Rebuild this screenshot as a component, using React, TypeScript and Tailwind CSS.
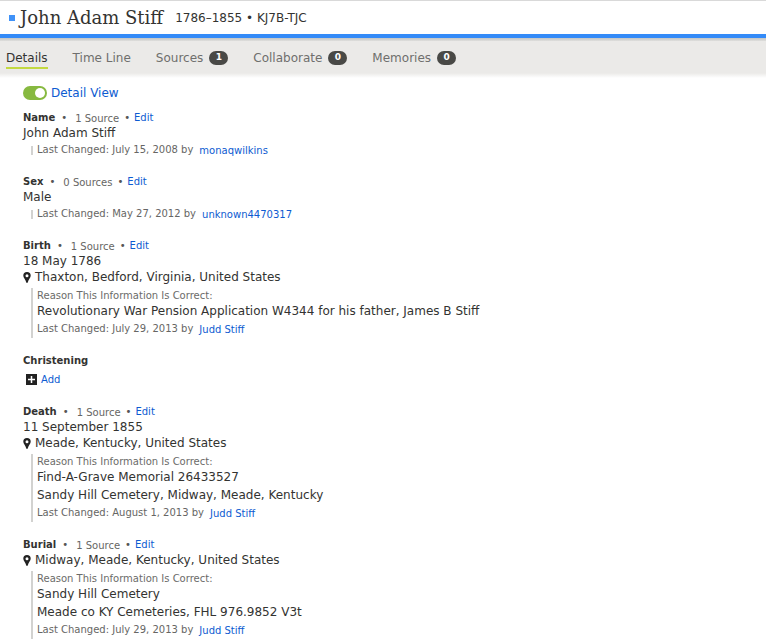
import React, { useState } from "react";

type Fact = {
  title: string;
  sources?: string;
  value?: string;
  place?: string;
  reason?: string[];
  changed?: string;
  by?: string;
};

const facts: Fact[] = [
  { title: "Name", sources: "1 Source", value: "John Adam Stiff", changed: "July 15, 2008", by: "monaqwilkins" },
  { title: "Sex", sources: "0 Sources", value: "Male", changed: "May 27, 2012", by: "unknown4470317" },
  {
    title: "Birth",
    sources: "1 Source",
    value: "18 May 1786",
    place: "Thaxton, Bedford, Virginia, United States",
    reason: ["Revolutionary War Pension Application W4344 for his father, James B Stiff"],
    changed: "July 29, 2013",
    by: "Judd Stiff",
  },
  { title: "Christening" },
  {
    title: "Death",
    sources: "1 Source",
    value: "11 September 1855",
    place: "Meade, Kentucky, United States",
    reason: ["Find-A-Grave Memorial 26433527", "Sandy Hill Cemetery, Midway, Meade, Kentucky"],
    changed: "August 1, 2013",
    by: "Judd Stiff",
  },
  {
    title: "Burial",
    sources: "1 Source",
    place: "Midway, Meade, Kentucky, United States",
    reason: ["Sandy Hill Cemetery", "Meade co KY Cemeteries, FHL 976.9852 V3t"],
    changed: "July 29, 2013",
    by: "Judd Stiff",
  },
];

const tabs = [
  { label: "Details" },
  { label: "Time Line" },
  { label: "Sources", count: 1 },
  { label: "Collaborate", count: 0 },
  { label: "Memories", count: 0 },
];

function Pin() {
  return (
    <svg width="8" height="11" viewBox="0 0 8 11" aria-hidden="true" className="shrink-0">
      <path
        fill="#222"
        fillRule="evenodd"
        d="M4 0A3.700 3.700 0 0 0 .3 3.700C.3 6 2.700 7.500 3.200 10.300c.1.900 1.500.900 1.600 0C5.300 7.500 7.700 6 7.700 3.700A3.700 3.700 0 0 0 4 0Zm0 2.200a1.500 1.500 0 1 1 0 3 1.500 1.500 0 0 1 0-3Z"
      />
    </svg>
  );
}

function FactSection({ fact }: { fact: Fact }) {
  return (
    <section>
      <div className="flex h-[15px] items-center text-[10px] leading-[15px]">
        <h2 className="font-bold text-[#333331]">{fact.title}</h2>
        {fact.sources && (
          <>
            <span className="ml-[6px] text-[#555]">•</span>
            <button type="button" className="ml-2 pt-[2px] text-[#666664]">{fact.sources}</button>
            <span className="ml-[5px] text-[#555]">•</span>
            <a href="#edit" className="ml-1 text-[#0d5bd1]">Edit</a>
          </>
        )}
      </div>
      {fact.value && <p className="h-4 text-[12px] leading-4">{fact.value}</p>}
      {fact.place && (
        <p className="flex h-4 items-center gap-1 text-[12px] leading-4">
          <Pin />
          {fact.place}
        </p>
      )}
      {fact.changed ? (
        <div className={fact.reason ? "ml-2 mt-[3px] border-l-2 border-[#d2d2d0] pl-1" : "ml-2 flex items-center"}>
          {!fact.reason && <span className="mr-1 h-[9px] w-[2px] bg-[#d2d2d0]" />}
          {fact.reason && (
            <>
              <p className="h-[14px] text-[10px] leading-[15px] text-[#6b6b69]">Reason This Information Is Correct:</p>
              {fact.reason.map((line) => (
                <p key={line} className="text-[12px] leading-[18px]">{line}</p>
              ))}
            </>
          )}
          <p className="flex h-[18px] gap-[6px] text-[10px] leading-[18px] text-[#666664]">
            Last Changed: {fact.changed} by
            <a href="#contributor" className="leading-[20px] text-[#0d5bd1]">{fact.by}</a>
          </p>
        </div>
      ) : (
        <button type="button" className="ml-[3px] flex h-[21px] items-center gap-1 pt-[1px] text-[10px] text-[#0d5bd1]">
          <svg width="11" height="11" viewBox="0 0 11 11" aria-hidden="true">
            <path fill="#222" d="M0 0h11v11H0z" />
            <path stroke="#fff" strokeWidth="1.500" d="M5.500 2v7M2 5.500h7" />
          </svg>
          Add
        </button>
      )}
    </section>
  );
}

export default function App() {
  const [detail, setDetail] = useState(true);
  return (
    <div className="bg-white font-['DejaVu_Sans',sans-serif] text-[#333331]">
      <header className="flex h-[38px] items-center border-b-4 border-t border-b-[#348bf8] border-t-[#d9d9d9] pl-[9px]">
        <span className="h-[6px] w-[6px] bg-[#4092f8]" />
        <h1 className="ml-[5px] whitespace-nowrap font-['DejaVu_Serif',serif] text-[18px]">John Adam Stiff</h1>
        <p className="ml-3 whitespace-nowrap text-[12px]">1786–1855 • KJ7B-TJC</p>
      </header>
      <div className="h-[3px] bg-linear-to-b from-[#c5c5c3] to-[#dfdfdd]" />
      <nav className="flex h-8 items-center gap-[25px] bg-[#ebeae8] pl-[6px] pt-[2px] text-[12px] text-[#6f6f6d]">
        {tabs.map((tab, i) => (
          <a
            key={tab.label}
            href="#tab"
            className={
              i === 0
                ? "flex h-[22px] items-center border-y-2 border-t-transparent border-b-[#c3d941] text-[#333331]"
                : "flex h-[22px] items-center gap-[6px] whitespace-nowrap"
            }
          >
            {tab.label}
            {tab.count !== undefined && (
              <span className="flex h-[14px] w-[19px] items-center justify-center rounded-full bg-[#494946] text-[9px] font-bold text-white">
                {tab.count}
              </span>
            )}
          </a>
        ))}
      </nav>
      <div className="h-[5px] bg-linear-to-b from-[#ebeae8] to-white" />
      <main className="px-[23px] pt-2">
        <label className="flex h-[14px] w-fit cursor-pointer items-center gap-1 text-[12px] text-[#0d5bd1]">
          <input
            type="checkbox"
            checked={detail}
            onChange={(e) => setDetail(e.target.checked)}
            className="peer sr-only"
          />
          <span className="flex h-[14px] w-6 items-center justify-start rounded-full bg-[#999] px-[2px] peer-checked:justify-end peer-checked:bg-[#87b940]">
            <span className="h-[10px] w-[10px] rounded-full bg-white" />
          </span>
          Detail View
        </label>
        <div className="mt-[10px] flex flex-col gap-[15px]">
          {facts.map((fact) => (
            <FactSection key={fact.title} fact={fact} />
          ))}
        </div>
      </main>
    </div>
  );
}
